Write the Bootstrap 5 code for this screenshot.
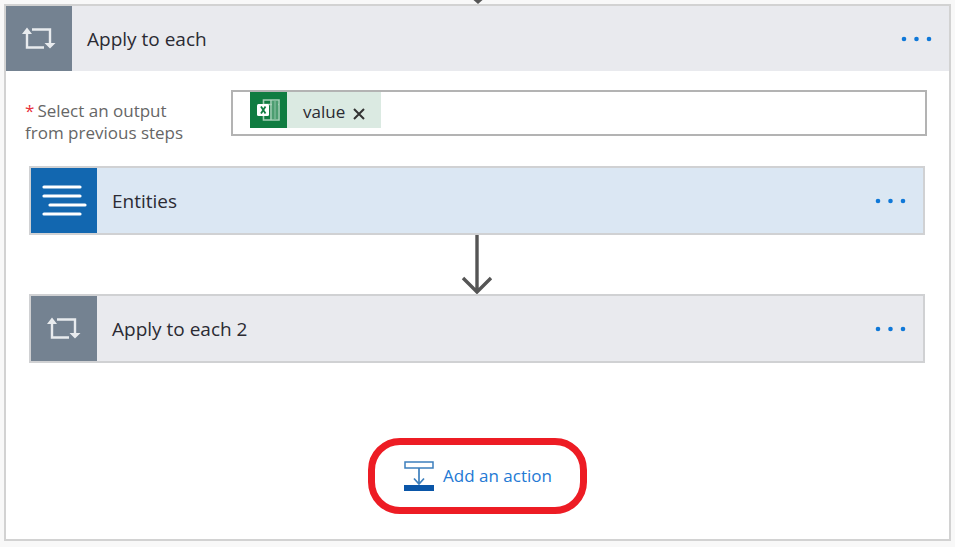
<!DOCTYPE html>
<html lang="en">
<head>
<meta charset="utf-8">
<meta name="viewport" content="width=device-width, initial-scale=1">
<title>Apply to each</title>
<link href="https://cdn.jsdelivr.net/npm/bootstrap@5.3.0/dist/css/bootstrap.min.css" rel="stylesheet">
<style>
  body { background: #f8f8f8; font-family: "Open Sans", "Noto Sans", sans-serif; color: #2b2b33; }
  .flow-scope { border: 2px solid #d2d2d2; background: #fff; }
  .flow-step { border: 2px solid #d0d1d3; }
  .step-head { background: #e9eaee; min-height: 65px; font-size: 19px; }
  .step-head.step-data { background: #dbe7f3; }
  .step-icon { width: 66px; background: #748291; }
  .step-data .step-icon { background: #1267b0; }
  .step-title { font-size: 19px; line-height: 28px; padding-left: 15px; }
  .step-menu { color: #0f78d8; }
  .param-row { padding: 19px 22px 0 19px; }
  .param-label { width: 206px; font-size: 17px; line-height: 22px; color: #666; padding-top: 10px; }
  .param-label .req { color: #e8323c; margin-right: 3px; }
  .token-box { border: 2px solid #b3b3b3; height: 46px; padding-left: 17px; }
  .token { background: #dbeae2; height: 36px; font-size: 17px; }
  .token-logo { width: 37px; background: #107c41; }
  .token-box input { outline: 0; min-width: 0; }
  .steps { padding: 22px 24px 0 23px; }
  .scope-end { padding: 75px 0 25px; }
  .add-action { border: 7px solid #ed1c24; border-radius: 32px; height: 76px; width: 219px; background: #fff; color: #2379d4; font-size: 17px; }
</style>
</head>
<body>
<svg class="d-none" aria-hidden="true">
  <symbol id="loop" viewBox="0 0 34 24">
    <path d="M5 5V20.500H22M10 2.500H28V18" fill="none" stroke="#e8ebee" stroke-width="2.400"/>
    <path d="M0 7L5 0.500L10 7ZM22.500 16H33.500L28 21.500Z" fill="#e8ebee"/>
  </symbol>
  <symbol id="dots" viewBox="0 0 32 6">
    <g fill="currentColor"><circle cx="3" cy="3" r="2.300"/><circle cx="15.500" cy="3" r="2.300"/><circle cx="28" cy="3" r="2.300"/></g>
  </symbol>
</svg>
<div class="overflow-hidden text-center lh-1">
  <svg class="d-block mx-auto" width="14" height="4" viewBox="0 0 14 4" aria-hidden="true"><path d="M2.500 0H11.500L7 4Z" fill="#555"/></svg>
</div>
<main class="flow-scope mx-1 mb-1">
  <header class="step-head d-flex align-items-stretch">
    <span class="step-icon d-flex align-items-center justify-content-center"><svg width="34" height="24" aria-hidden="true"><use href="#loop"/></svg></span>
    <h1 class="step-title flex-grow-1 fw-normal mb-0 align-self-center">Apply to each</h1>
    <button type="button" class="step-menu btn border-0 rounded-0 p-3 d-flex align-items-center" aria-label="Apply to each menu"><svg width="32" height="6" aria-hidden="true"><use href="#dots"/></svg></button>
  </header>
  <div class="param-row d-flex align-items-start">
    <label class="param-label flex-shrink-0" for="source"><span class="req">*</span>Select an output<br>from previous steps</label>
    <div class="token-box d-flex flex-grow-1">
      <span class="token d-flex align-items-stretch">
        <span class="token-logo d-flex align-items-center justify-content-center">
          <svg width="24" height="24" viewBox="0 0 24 24" aria-hidden="true">
            <path d="M6.500 2H22V22H6.500ZM14 2V22M6.500 6.500H22" fill="none" stroke="#a6d0b8" stroke-width="1.600"/>
            <rect x="15" y="3" width="6" height="18" fill="#4b9d70"/>
            <path d="M18 3V21" stroke="#8fc3a6"/>
            <rect x="0" y="6" width="12" height="12" rx="1.500" fill="#fff"/>
            <path d="M4 8.500L8.500 15.500M8.500 8.500L4 15.500" stroke="#107c41" stroke-width="1.800"/>
          </svg>
        </span>
        <span class="align-self-center ps-3 pt-1">value</span>
        <button type="button" class="btn border-0 p-0 ps-2 pe-3 pt-2 d-flex align-items-center" aria-label="Remove value"><svg width="12" height="12" viewBox="0 0 12 12" aria-hidden="true"><path d="M1 1L11 11M11 1L1 11" stroke="#333" stroke-width="2"/></svg></button>
      </span>
      <input id="source" type="text" class="border-0 flex-grow-1 bg-transparent">
    </div>
  </div>
  <div class="steps">
    <section class="flow-step">
      <div class="step-head step-data d-flex align-items-stretch">
        <span class="step-icon d-flex align-items-center justify-content-center"><svg width="46" height="34" viewBox="0 0 46 34" aria-hidden="true"><path d="M3 3H39M3 12H39M9 21H44M3 30H39" stroke="#fff" stroke-width="3.200" stroke-linecap="round"/></svg></span>
        <h2 class="step-title flex-grow-1 fw-normal mb-0 align-self-center">Entities</h2>
        <button type="button" class="step-menu btn border-0 rounded-0 p-3 d-flex align-items-center" aria-label="Entities menu"><svg width="32" height="6" aria-hidden="true"><use href="#dots"/></svg></button>
      </div>
    </section>
    <svg class="d-block mx-auto" width="32" height="59" viewBox="0 0 32 59" aria-hidden="true"><path d="M16 0V57M2 43L16 57L30 43" fill="none" stroke="#555" stroke-width="3.400"/></svg>
    <section class="flow-step">
      <div class="step-head d-flex align-items-stretch">
        <span class="step-icon d-flex align-items-center justify-content-center"><svg width="34" height="24" aria-hidden="true"><use href="#loop"/></svg></span>
        <h2 class="step-title flex-grow-1 fw-normal mb-0 align-self-center">Apply to each 2</h2>
        <button type="button" class="step-menu btn border-0 rounded-0 p-3 d-flex align-items-center" aria-label="Apply to each 2 menu"><svg width="32" height="6" aria-hidden="true"><use href="#dots"/></svg></button>
      </div>
    </section>
  </div>
  <div class="scope-end d-flex justify-content-center">
    <button type="button" class="add-action d-flex align-items-center justify-content-center gap-2 p-0">
      <svg width="32" height="32" viewBox="0 0 32 32" aria-hidden="true"><path d="M2 2H30V8H2Z" fill="none" stroke="#3d7fbd" stroke-width="1.500"/><path d="M16 8V24M11 18.500L16 24L21 18.500" fill="none" stroke="#3d7fbd" stroke-width="1.700"/><rect x="1" y="25" width="30" height="6" fill="#0a56a8"/></svg>
      <span>Add an action</span>
    </button>
  </div>
</main>
<script src="https://cdn.jsdelivr.net/npm/bootstrap@5.3.0/dist/js/bootstrap.bundle.min.js"></script>
</body>
</html>
